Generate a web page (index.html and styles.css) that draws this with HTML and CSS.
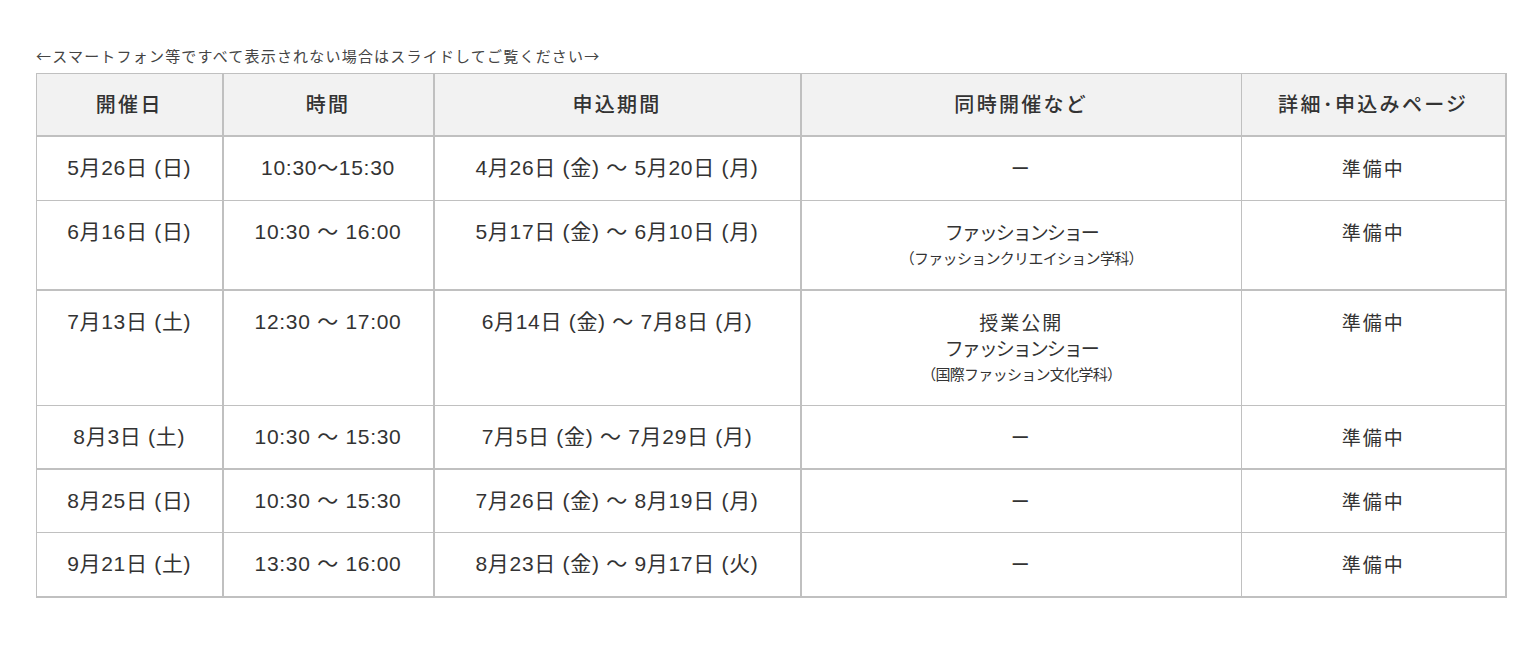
FILE: index.html
```html
<!DOCTYPE html>
<html lang="ja">
<head>
<meta charset="utf-8">
<title>日程</title>
<link rel="stylesheet" href="styles.css">
</head>
<body>
<div class="wrap">
  <p class="note">←スマートフォン等ですべて表示されない場合はスライドしてご覧ください→</p>
  <table class="schedule">
    <colgroup>
      <col class="c1"><col class="c2"><col class="c3"><col class="c4"><col class="c5">
    </colgroup>
    <thead>
      <tr>
        <th class="thick-r">開催日</th>
        <th class="thick-r">時間</th>
        <th class="thick-r">申込期間</th>
        <th>同時開催など</th>
        <th>詳細･申込みページ</th>
      </tr>
    </thead>
    <tbody>
      <tr>
        <td class="thick-r">5月26日 (日)</td>
        <td class="thick-r">10:30〜15:30</td>
        <td class="thick-r">4月26日 (金) 〜 5月20日 (月)</td>
        <td class="cjk">ー</td>
        <td class="cjk">準備中</td>
      </tr>
      <tr class="thick-b">
        <td class="thick-r">6月16日 (日)</td>
        <td class="thick-r">10:30 〜 16:00</td>
        <td class="thick-r">5月17日 (金) 〜 6月10日 (月)</td>
        <td class="cjk"><span class="line kana">ファッションショー</span><span class="line small">（ファッションクリエイション学科）</span></td>
        <td class="cjk">準備中</td>
      </tr>
      <tr class="after-thick">
        <td class="thick-r">7月13日 (土)</td>
        <td class="thick-r">12:30 〜 17:00</td>
        <td class="thick-r">6月14日 (金) 〜 7月8日 (月)</td>
        <td class="cjk"><span class="line">授業公開</span><span class="line kana">ファッションショー</span><span class="line small">（国際ファッション文化学科）</span></td>
        <td class="cjk">準備中</td>
      </tr>
      <tr class="thick-b">
        <td class="thick-r">8月3日 (土)</td>
        <td class="thick-r">10:30 〜 15:30</td>
        <td class="thick-r">7月5日 (金) 〜 7月29日 (月)</td>
        <td class="cjk">ー</td>
        <td class="cjk">準備中</td>
      </tr>
      <tr class="after-thick">
        <td class="thick-r">8月25日 (日)</td>
        <td class="thick-r">10:30 〜 15:30</td>
        <td class="thick-r">7月26日 (金) 〜 8月19日 (月)</td>
        <td class="cjk">ー</td>
        <td class="cjk">準備中</td>
      </tr>
      <tr>
        <td class="thick-r">9月21日 (土)</td>
        <td class="thick-r">13:30 〜 16:00</td>
        <td class="thick-r">8月23日 (金) 〜 9月17日 (火)</td>
        <td class="cjk">ー</td>
        <td class="cjk">準備中</td>
      </tr>
    </tbody>
  </table>
</div>
</body>
</html>
```

FILE: styles.css
```css
html, body {
  margin: 0;
  padding: 0;
  background: #ffffff;
}

body {
  font-family: "Liberation Sans", "Noto Sans CJK JP", sans-serif;
  color: #333333;
}

.wrap {
  padding: 44px 25px 0 36px;
}

.note {
  margin: 0 0 5px 0;
  font-family: "Noto Sans CJK JP", sans-serif;
  font-size: 15px;
  letter-spacing: 1.2px;
  line-height: 24px;
  color: #444444;
  white-space: nowrap;
}

.schedule {
  width: 1469px;
  table-layout: fixed;
  border-collapse: collapse;
  border-top: 1px solid #c0c0c0;
  border-left: 1px solid #c0c0c0;
  border-right: 2px solid #c0c0c0;
  border-bottom: 2px solid #c0c0c0;
}

.c1 { width: 186px; }
.c2 { width: 211px; }
.c3 { width: 367px; }
.c4 { width: 441px; }
.c5 { width: 264px; }

.schedule th,
.schedule td {
  border: 1px solid #c0c0c0;
  text-align: center;
  vertical-align: top;
  font-size: 21px;
  line-height: 26px;
  letter-spacing: 0.7px;
  padding: 18px 8px 19px;
  font-weight: normal;
}

.schedule th {
  background: #f2f2f2;
  font-family: "Noto Sans CJK JP", sans-serif;
  font-size: 20px;
  font-weight: 500;
  letter-spacing: 2.3px;
  padding: 17px 8px 18px;
  border-bottom-width: 2px;
}

.schedule .thick-r {
  border-right-width: 2px;
}

.schedule .thick-b td {
  border-bottom-width: 2px;
  padding-bottom: 18px;
}

.schedule .after-thick td {
  padding-bottom: 18px;
}

.schedule .cjk {
  font-family: "Noto Sans CJK JP", sans-serif;
  font-size: 19px;
  letter-spacing: 2px;
}

.schedule .line {
  display: block;
  height: 26px;
  line-height: 26px;
}

.schedule .kana {
  letter-spacing: -2px;
}

.schedule .small {
  font-size: 15px;
  letter-spacing: -0.7px;
}
```
